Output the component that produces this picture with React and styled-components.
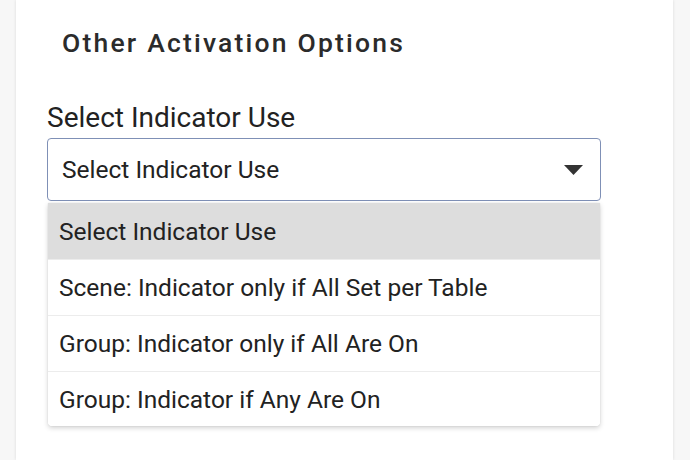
import styled, { createGlobalStyle } from 'styled-components';

const GlobalStyle = createGlobalStyle`
  html, body {
    margin: 0;
    padding: 0;
    background: #f7f7f7;
    font-family: Roboto, "Liberation Sans", sans-serif;
    color: #222;
  }
`;

const options = [
  "Select Indicator Use",
  "Scene: Indicator only if All Set per Table",
  "Group: Indicator only if All Are On",
  "Group: Indicator if Any Are On",
];

const Arrow = () => (
  <svg width="19" height="10" viewBox="0 0 19 10">
    <path d="M0 0 H19 L9.5 10 Z" fill="#333" />
  </svg>
);

const App = () => {
  return (
    <>
      <GlobalStyle />
      <Card>
        <Title>Other Activation Options</Title>
        <Label>Select Indicator Use</Label>
        <Field>
          <Select>
            <span>Select Indicator Use</span>
            <Arrow />
          </Select>
          <Menu>
            {options.map((o, i) => (
              <Item key={o} selected={i === 0}>{o}</Item>
            ))}
          </Menu>
        </Field>
      </Card>
    </>
  );
}

export default App;

const Card = styled.div`
  margin: 0 17px 0 16px;
  min-height: 460px;
  background: #fff;
  box-shadow: 0 0 3px rgba(0,0,0,0.12);
  padding: 27px 31px 0;
  box-sizing: border-box;
  display: flex;
  flex-direction: column;
`
const Title = styled.h3`
  margin: 0;
  padding-left: 15px;
  font-size: 26.5px;
  line-height: 31px;
  font-weight: 500;
  letter-spacing: 2.2px;
  color: #2b2b2b;
`
const Label = styled.div`
  margin-top: 44px;
  font-size: 28px;
  line-height: 32px;
  color: #222;
`
const Field = styled.div`
  margin-top: 4px;
  width: 554px;
  display: flex;
  flex-direction: column;
  gap: 2px;
`
const Select = styled.div`
  height: 63px;
  box-sizing: border-box;
  border: 1.5px solid #7f90b6;
  border-radius: 4px;
  padding: 0 17px 0 14px;
  display: flex;
  align-items: center;
  justify-content: space-between;
  font-size: 24.5px;
  line-height: 30px;
`
const Menu = styled.div`
  margin-left: 1px;
  width: 552px;
  background: #fff;
  border-radius: 0 0 4px 4px;
  box-shadow: 0 2px 5px rgba(0,0,0,0.18), 0 0 1px rgba(0,0,0,0.2);
  overflow: hidden;
`
const Item = styled.div`
  height: 56px;
  box-sizing: border-box;
  display: flex;
  align-items: center;
  padding-left: 11px;
  font-size: 24.5px;
  background: ${p => p.selected ? '#dddddd' : '#fff'};
  border-top: ${p => p.selected ? 'none' : '1px solid #ececec'};
  &:last-child {
    height: 55px;
  }
`
